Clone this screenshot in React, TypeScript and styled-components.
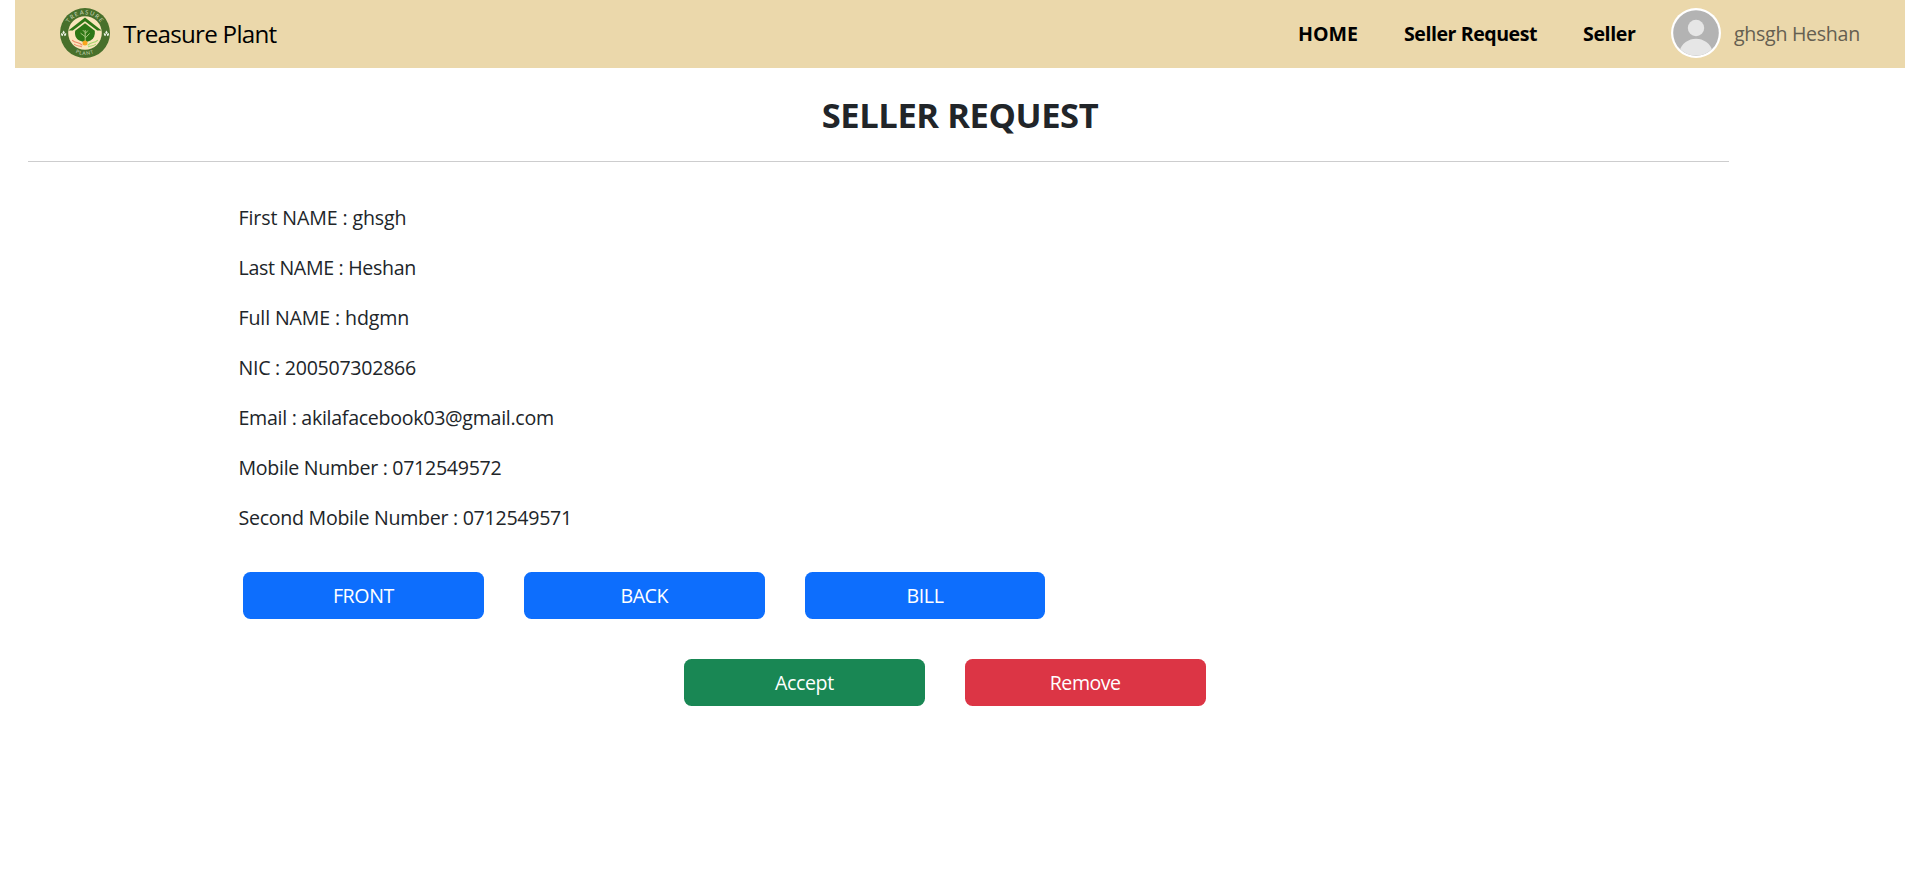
import React from "react";
import styled, { createGlobalStyle } from "styled-components";

const GlobalStyle = createGlobalStyle`
  * { box-sizing: border-box; }
  body {
    margin: 0;
    background: #fff;
    color: #212529;
    font-family: "Segoe UI", "Open Sans", "Noto Sans", sans-serif;
    font-size: 19.6px;
    line-height: 30px;
  }
`;

const Page = styled.div`
  width: 1919px;
  height: 874px;
  padding: 0 14px 0 15px;
  overflow: hidden;
`;

const Navbar = styled.nav`
  display: flex;
  align-items: center;
  height: 68px;
  padding: 0 45px 2px 45px;
  background: #ebd8ab;
  color: #000;
`;

const Text = styled.span<{ $track?: number }>`
  white-space: nowrap;
  letter-spacing: ${(p) => p.$track ?? 0}px;
`;

const Brand = styled.a`
  display: flex;
  align-items: center;
  gap: 13px;
  margin-right: auto;
  font-size: 24.2px;
  svg { display: block; }
  span { padding-top: 2px; }
`;

const NavLink = styled.a<{ $width: number }>`
  width: ${(p) => p.$width}px;
  padding-top: 2px;
  font-weight: 700;
  white-space: nowrap;
`;

const User = styled.div`
  display: flex;
  align-items: center;
  gap: 13px;
  color: #655f51;
  svg { display: block; }
`;

const UserName = styled.div`
  width: 126px;
  padding-top: 2px;
`;

const Title = styled.h1`
  margin: 26px 0 0;
  height: 42px;
  line-height: 42px;
  font-size: 34.5px;
  font-weight: 700;
  text-align: center;
`;

const Rule = styled.hr`
  width: 1701px;
  height: 1px;
  margin: 25px 0 0 13px;
  border: 0;
  background: #cdcdce;
`;

const Details = styled.section`
  display: flex;
  flex-direction: column;
  gap: 20px;
  margin: 41px 0 0 223.5px;
`;

const Field = styled.p`
  margin: 0;
`;

const Actions = styled.div<{ $indent: number; $top: number }>`
  display: flex;
  gap: 40px;
  margin: ${(p) => p.$top}px 0 0 ${(p) => p.$indent}px;
`;

const tones = { primary: "#0d6efd", success: "#198754", danger: "#dc3545" };

const Button = styled.button<{ $tone: keyof typeof tones }>`
  width: 240.8px;
  height: 47px;
  padding: 0;
  border: 0;
  border-radius: 7.5px;
  background: ${(p) => tones[p.$tone]};
  color: #fff;
  font: inherit;
`;

const Logo = () => (
  <svg width="50" height="50" viewBox="0 0 50 50">
    <defs>
      <path id="arcTop" d="M6.3 25a18.7 18.7 0 0 1 37.4 0" />
      <path id="arcBottom" d="M3 25a22 22 0 0 0 44 0" />
    </defs>
    <circle cx="25" cy="25" r="25" fill="#48702b" />
    <circle cx="25" cy="25" r="16.8" fill="#fae5bb" />
    <g fill="#cfdabd" fontFamily="Lato, sans-serif" fontWeight="400" fontSize="5.8">
      <text textAnchor="middle" letterSpacing="1.2">
        <textPath href="#arcTop" startOffset="50%">TREASURE</textPath>
      </text>
      <text textAnchor="middle" letterSpacing="0.8" fontSize="5">
        <textPath href="#arcBottom" startOffset="50%">PLANT</textPath>
      </text>
    </g>
    <g fill="#edf3e4">
      <path d="M3.6 22.6l1.3 2-1.3 1.6-1.2-1.6zM1 25l2.2 1-.5 2.2-1.5-1zM6.2 25l-2.2 1 .5 2.2 1.6-1z" />
      <path d="M46.4 22.6l1.3 2-1.3 1.6-1.2-1.6zM43.8 25l2.2 1-.5 2.2-1.5-1zM49 25l-2.2 1 .5 2.2 1.6-1z" />
    </g>
    <path d="M25 9.4L41.6 22.4H37.2L25 13.3 12.8 22.4H8.4z" fill="#2e7716" />
    <path d="M25 15.3l9.8 7.4c.5 4.3-.8 7.8-4.2 9.8L25 34.6l-5.6-2.1c-3.9-2.1-4.9-5.7-4.2-9.8z" fill="#2e7716" />
    <path d="M25.2 34V22M25.2 30l4.4-4.6M25.2 28.6l-4.6-3.4M25.2 25.6l2.6-3M25.2 24.6l-2.3-2.4" stroke="#b8cf8f" strokeWidth="0.9" fill="none" />
    <g fill="none" strokeLinecap="round">
      <path d="M12.5 32.4c3 3.1 6.3 1.2 9.5 4.6M14.5 36.4c3 2 4.5 1.2 7 2.4" stroke="#f08a68" strokeWidth="1.1" />
      <path d="M37.5 32.4c-3 3.1-6.3 1.2-9.5 4.6M35.5 36.4c-3 2-4.5 1.2-7 2.4" stroke="#a3d96c" strokeWidth="1.1" />
    </g>
    <circle cx="25" cy="35" r="2.5" fill="#f9a51c" />
  </svg>
);

const Avatar = () => (
  <svg width="50" height="50" viewBox="0 0 50 50">
    <defs>
      <clipPath id="face"><circle cx="25" cy="25" r="22.6" /></clipPath>
    </defs>
    <circle cx="25" cy="25" r="25" fill="#fff" />
    <circle cx="25" cy="25" r="22.8" fill="#b3b3b3" />
    <g clipPath="url(#face)" fill="#e6e6e6">
      <circle cx="25" cy="20" r="8.2" />
      <path d="M8.5 43a17.2 17.2 0 0 1 33 0L36 46.5a25 25 0 0 1-22 0z" />
    </g>
  </svg>
);

const fields = [
  { text: "First NAME : ghsgh", track: -0.12 },
  { text: "Last NAME : Heshan", track: -0.32 },
  { text: "Full NAME : hdgmn", track: -0.13 },
  { text: "NIC : 200507302866", track: -0.27 },
  { text: "Email : akilafacebook03@gmail.com", track: -0.29 },
  { text: "Mobile Number : 0712549572", track: -0.3 },
  { text: "Second Mobile Number : 0712549571", track: -0.28 },
];

export default function App() {
  return (
    <Page>
      <GlobalStyle />
      <Navbar>
        <Brand>
          <Logo />
          <Text $track={-0.75}>Treasure Plant</Text>
        </Brand>
        <NavLink $width={106}><Text>HOME</Text></NavLink>
        <NavLink $width={179}><Text $track={-0.46}>Seller Request</Text></NavLink>
        <NavLink $width={88}><Text $track={-0.4}>Seller</Text></NavLink>
        <User>
          <Avatar />
          <UserName><Text $track={-0.3}>ghsgh Heshan</Text></UserName>
        </User>
      </Navbar>
      <Title><Text $track={-0.42}>SELLER REQUEST</Text></Title>
      <Rule />
      <Details>
        {fields.map((f) => (
          <Field key={f.text}><Text $track={f.track}>{f.text}</Text></Field>
        ))}
      </Details>
      <Actions $indent={228} $top={39}>
        <Button $tone="primary"><Text $track={-0.4}>FRONT</Text></Button>
        <Button $tone="primary"><Text $track={-0.5}>BACK</Text></Button>
        <Button $tone="primary"><Text $track={-0.4}>BILL</Text></Button>
      </Actions>
      <Actions $indent={669} $top={40}>
        <Button $tone="success"><Text $track={-0.4}>Accept</Text></Button>
        <Button $tone="danger"><Text $track={-0.5}>Remove</Text></Button>
      </Actions>
    </Page>
  );
}
